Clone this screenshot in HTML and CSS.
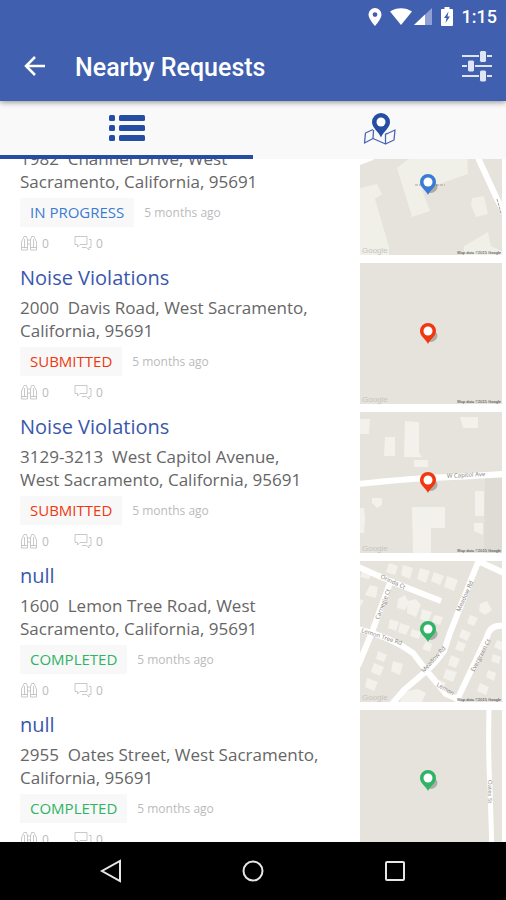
FILE: index.html
```html
<!DOCTYPE html>
<html lang="en">
<head>
<meta charset="utf-8">
<meta name="viewport" content="width=device-width, initial-scale=1">
<title>Nearby Requests</title>
<link rel="stylesheet" href="styles.css">
</head>
<body>
<svg class="defs" aria-hidden="true">
  <symbol id="pin" viewBox="0 0 24 24">
    <ellipse cx="15" cy="15" rx="6" ry="4.500" fill="#000" opacity=".24" transform="rotate(-35 15 15)"/>
    <path d="M11 22C9 17 3 14.500 3 9a8 8 0 0 1 16 0c0 5.500-6 8-8 13z" fill="currentColor"/>
    <circle cx="11" cy="9" r="4.500" fill="#fff"/>
  </symbol>
  <symbol id="watch" viewBox="0 0 18 16">
    <path d="M1.500 15V7L4 1.500h2.500L7.500 5v10zM10.500 15V5l1-3.500H14L16.500 7v8zM7.500 5h3M7.500 9h3M4.500 4v9M13.500 4v9M1.500 12.500h6M10.500 12.500h6" fill="none" stroke="currentColor" stroke-width=".8"/>
  </symbol>
  <symbol id="chat" viewBox="0 0 18 16">
    <path d="M1 1.500h12v8H6L3.500 12V9.500H1zM15 4.500h2v8h-2V15l-2.500-2.500H8" fill="none" stroke="currentColor" stroke-width=".8"/>
  </symbol>
</svg>

<header class="appbar">
  <div class="status">
    <svg width="14" height="18" viewBox="0 0 14 18"><path d="M7 0a6.500 6.500 0 0 0-6.500 6.500C.5 11 7 18 7 18s6.500-7 6.500-11.500A6.500 6.500 0 0 0 7 0zm0 9a2.400 2.400 0 1 1 0-4.800A2.400 2.400 0 0 1 7 9z" fill="#fff"/></svg>
    <svg class="wifi" width="22" height="17" viewBox="0 0 22 17"><path d="M11 17L0 3.500C6-1 16-1 22 3.500z" fill="#fff"/></svg>
    <svg class="signal" width="18" height="17" viewBox="0 0 18 17"><path d="M18 0v17H0z" fill="#8fa1d3"/><path d="M11 6.600V17H0z" fill="#fff"/></svg>
    <svg class="battery" width="12" height="19" viewBox="0 0 12 19"><path d="M3.500 0h5v2H11q1 0 1 1v15q0 1-1 1H1q-1 0-1-1V3q0-1 1-1h2.500z" fill="#fff"/><path d="M7.500 4.500L3 11h2.500L4.500 16 9 9.500H6.500z" fill="#405fae"/></svg>
    <span class="clock">1:15</span>
  </div>
  <div class="toolbar">
    <button class="icon-button" type="button" aria-label="Back">
      <svg width="22" height="22" viewBox="0 0 22 22"><path d="M21 10H2.500M11 1l-9 9 9 9" fill="none" stroke="#fff" stroke-width="2.500"/></svg>
    </button>
    <h1>Nearby Requests</h1>
    <button class="icon-button" type="button" aria-label="Filters">
      <svg width="32" height="32" viewBox="0 0 32 32"><path d="M1 5h30M1 15h30M1 25h30" stroke="#dfe5f5" stroke-width="2"/><g fill="#dfe5f5" stroke="#405fae"><rect x="18.500" y="-.5" width="7" height="12" rx="2"/><rect x="6.500" y="9" width="7" height="12" rx="2"/><rect x="18.500" y="19" width="7" height="12" rx="2"/></g></svg>
    </button>
  </div>
</header>

<nav class="tabs" aria-label="View">
  <button class="tab active" type="button" aria-label="List">
    <svg width="36" height="26" viewBox="0 0 36 26" fill="#244da3"><rect width="6" height="6" rx="1.500"/><rect y="10" width="6" height="6" rx="1.500"/><rect y="20" width="6" height="6" rx="1.500"/><rect x="10" width="26" height="6" rx="1.500"/><rect x="10" y="10" width="26" height="6" rx="1.500"/><rect x="10" y="20" width="26" height="6" rx="1.500"/></svg>
  </button>
  <button class="tab" type="button" aria-label="Map">
    <svg width="34" height="34" viewBox="0 0 34 34"><path d="M10 18.500l-7.500 3.500-1 10 8.500-4.500 12.500 5.500 8.500-4L32 19l-7.500 3.500-2 .5M10.500 19l-.5 8.500M22.500 23v10" fill="none" stroke="#4a66b3" stroke-width="1.300" stroke-linejoin="round"/><path d="M18 26.500C16 21 9 17 9 11a9 9 0 0 1 18 0C27 17 20 21 18 26.500z" fill="#244da3"/><circle cx="18" cy="11" r="4.500" fill="#fff"/></svg>
  </button>
</nav>

<main class="viewport">
  <ul class="requests">
    <li class="request">
      <div class="info">
        <h2><a href="#">Noise Violations</a></h2>
        <p class="address">1982  Channel Drive, West Sacramento, California, 95691</p>
        <div class="state"><span class="badge progress">IN PROGRESS</span><span class="age">5 months ago</span></div>
        <div class="counts"><svg><use href="#watch"/></svg><span>0</span><svg><use href="#chat"/></svg><span>0</span></div>
      </div>
      <div class="map progress">
        <svg viewBox="0 0 142 141" preserveAspectRatio="xMidYMid slice">
          <g fill="#f0efe8"><path d="M37 54l20-16 50-2 1 24-46 16 8 21-18 6z"/><path d="M0 74l17-4 5 10-7 5 14 48v8H0z"/><path d="M112 84l12-2 4 18-12 3-5-12zM104 132l24-14 3 14 11 5v4h-38z"/></g>
          <path d="M0 0h60L13 46 0 51z" fill="#fff"/>
          <path d="M108 20l12 28 17 37 8 15" fill="none" stroke="#fff" stroke-width="6"/>
          <path d="M55 71h9M76 71h9M137 85l4 14" stroke="#a5a39d" stroke-dasharray="3 1"/>
        </svg>
        <svg class="marker"><use href="#pin"/></svg><span class="brand">Google</span><span class="credit">Map data ©2015 Google</span>
      </div>
    </li>
    <li class="request">
      <div class="info">
        <h2><a href="#">Noise Violations</a></h2>
        <p class="address">2000  Davis Road, West Sacramento, California, 95691</p>
        <div class="state"><span class="badge submitted">SUBMITTED</span><span class="age">5 months ago</span></div>
        <div class="counts"><svg><use href="#watch"/></svg><span>0</span><svg><use href="#chat"/></svg><span>0</span></div>
      </div>
      <div class="map submitted">
        <svg class="marker"><use href="#pin"/></svg><span class="brand">Google</span><span class="credit">Map data ©2015 Google</span>
      </div>
    </li>
    <li class="request">
      <div class="info">
        <h2><a href="#">Noise Violations</a></h2>
        <p class="address">3129-3213  West Capitol Avenue, West Sacramento, California, 95691</p>
        <div class="state"><span class="badge submitted">SUBMITTED</span><span class="age">5 months ago</span></div>
        <div class="counts"><svg><use href="#watch"/></svg><span>0</span><svg><use href="#chat"/></svg><span>0</span></div>
      </div>
      <div class="map submitted">
        <svg viewBox="0 0 142 141" preserveAspectRatio="xMidYMid slice">
          <path d="M125 66h17v75h-18z" fill="#dedcd4"/>
          <g fill="#f2f1eb"><path d="M0 7h10l-1 15H0zM25 25h10v19H24zM45 9l14 1v31l3 4H44zM54 48h14v7H54zM100 5h18v11h-15zM12 86h10v7l-5 3-5-5zM0 96h4l1 10-1 15H0zM52 95h33v21H71v25H53zM115 79h9v25h-9zM114 111h9v12l-9-4z"/></g>
          <path d="M-2 72Q45 67 70 66T144 62" fill="none" stroke="#fff" stroke-width="6"/>
          <text x="87" y="66" transform="rotate(-3 87 66)">W Capitol Ave</text>
        </svg>
        <svg class="marker"><use href="#pin"/></svg><span class="brand">Google</span><span class="credit">Map data ©2015 Google</span>
      </div>
    </li>
    <li class="request">
      <div class="info">
        <h2><a href="#">null</a></h2>
        <p class="address">1600  Lemon Tree Road, West Sacramento, California, 95691</p>
        <div class="state"><span class="badge completed">COMPLETED</span><span class="age">5 months ago</span></div>
        <div class="counts"><svg><use href="#watch"/></svg><span>0</span><svg><use href="#chat"/></svg><span>0</span></div>
      </div>
      <div class="map completed">
        <svg viewBox="0 0 142 141" preserveAspectRatio="xMidYMid slice">
          <g fill="#f2f1eb"><path d="M29 2l9 3-3 9-9-3zM43 4l10 3-3 11-9-4zM60 7l10 3-4 12-9-4zM74 11l10 4-4 9-9-4zM87 15l11 4-4 11-10-4zM3 9l9 3-3 6-9-2zM10 24l8 2-2 11-11-3zM0 38l4 2-4 6zM38 38l7-4 4 8-4 7-8-2zM48 40l8-2 5 6-5 12-9-4zM62 48l10 3-4 10-8-3zM74 54l9 2-3 8-8-3zM30 58l9 3-3 9-8-3zM40 62l10 3-4 9-8-3zM52 68l9 3-2 7-9-3zM66 80l6 3-2 8-8-3zM18 90l9 4-3 7-8-3zM14 102l10 4-4 9-9-4zM33 100l10 3-3 11-9-4zM7 117l11 4-4 9-9-4zM43 131l15-3 8 4-4 9H40zM120 43l7-3 5 9-7 5-6-4zM110 54l8 3-4 8-7-3zM102 68l9 4-4 8-8-4zM98 80l8 3-3 8-8-3zM91 94l9 4-4 9-8-3zM86 108l11 3-4 10-10-4zM79 119l7 3-4 5-6-3zM137 79l5 2v9l-8-4zM133 93l8 3-2 7-8-3zM128 109l8 3-2 8-8-4zM120 122l9 4-3 8-9-4z"/></g>
          <g fill="none" stroke="#fff" stroke-width="6" stroke-linejoin="round"><path d="M-2 6l21 9 16 7 46 18M30 22L12 71-2 105M-2 68q33 8 55 24l13 17 20 24 12 5M120-4L90 72l-6 18q-10 14-20 22l-20 17-12 14M118 0l26 12M144 65q-14-2-17 11L96 141"/></g>
          <text x="20" y="17" transform="rotate(25 20 17)">Orinda Ct</text>
          <text x="19" y="59" transform="rotate(-69 19 59)">Carnegie Ct</text>
          <text x="1" y="71" transform="rotate(18 1 71)">Lemon Tree Rd</text>
          <text x="100" y="51" transform="rotate(-66 100 51)">Meadow Rd</text>
          <text x="64" y="112" transform="rotate(-48 64 112)">Meadow Rd</text>
          <text x="114" y="111" transform="rotate(-62 114 111)">Evergreen Ct</text>
          <text x="76" y="125" transform="rotate(30 76 125)">Lemon</text>
        </svg>
        <svg class="marker"><use href="#pin"/></svg><span class="brand">Google</span><span class="credit">Map data ©2015 Google</span>
      </div>
    </li>
    <li class="request">
      <div class="info">
        <h2><a href="#">null</a></h2>
        <p class="address">2955  Oates Street, West Sacramento, California, 95691</p>
        <div class="state"><span class="badge completed">COMPLETED</span><span class="age">5 months ago</span></div>
        <div class="counts"><svg><use href="#watch"/></svg><span>0</span><svg><use href="#chat"/></svg><span>0</span></div>
      </div>
      <div class="map completed">
        <svg viewBox="0 0 142 141" preserveAspectRatio="xMidYMid slice">
          <path d="M129-2q-1 50 1 80l2 65" fill="none" stroke="#fff" stroke-width="5"/>
          <text x="128" y="70" transform="rotate(90 128 70)">Oates St</text>
        </svg>
        <svg class="marker"><use href="#pin"/></svg><span class="brand">Google</span><span class="credit">Map data ©2015 Google</span>
      </div>
    </li>
  </ul>
</main>

<footer class="navbar">
  <button type="button" aria-label="Back"><svg width="24" height="24" viewBox="0 0 24 24"><path d="M21 2v20L3 12z"/></svg></button>
  <button type="button" aria-label="Home"><svg width="24" height="24" viewBox="0 0 24 24"><circle cx="12" cy="12" r="9.500"/></svg></button>
  <button type="button" aria-label="Recent apps"><svg width="24" height="24" viewBox="0 0 24 24"><rect x="3" y="3" width="18" height="18" rx="1"/></svg></button>
</footer>
</body>
</html>
```
FILE: styles.css
```css
* { box-sizing: border-box; }

body {
  margin: 0;
  height: 100vh;
  display: flex;
  flex-direction: column;
  background: #fff;
  color: #666;
  font-family: "Open Sans", "Noto Sans", sans-serif;
}

h1, h2, p, ul { margin: 0; padding: 0; }
button { padding: 0; border: 0; background: none; display: grid; place-items: center; cursor: pointer; }
.defs { position: absolute; width: 0; height: 0; }

.appbar {
  flex: none;
  background: #405fae;
  color: #fff;
  font-family: Roboto, sans-serif;
  box-shadow: 0 1px 6px rgba(0, 0, 0, .45);
  z-index: 1;
}
.status {
  height: 33px;
  padding: 0 9px;
  display: flex;
  align-items: center;
  justify-content: flex-end;
}
.wifi { margin-left: 8px; }
.signal { margin-left: 2px; }
.battery { margin: 0 9px; }
.clock { font-size: 18px; font-weight: 500; }

.toolbar {
  height: 68px;
  padding: 0 13px 0 24px;
  display: flex;
  align-items: center;
}
.toolbar h1 { flex: 1; margin-left: 29px; font-size: 25px; font-weight: 500; }

.tabs { flex: none; display: flex; height: 58px; background: #f9f9f9; }
.tab { flex: 1; border-bottom: 4px solid transparent; }
.tab.active { border-color: #244da3; }

.viewport { flex: 1; min-height: 0; overflow: hidden; }
.requests {
  margin-top: -45px;
  display: grid;
  gap: 8px;
  list-style: none;
}
.request { display: flex; padding: 0 4px 0 20px; }
.info { flex: 1; padding: 1px 40px 0 0; }
.info h2 { font-size: 20px; line-height: 28px; font-weight: 400; }
.info a { color: #3957ab; text-decoration: none; }
.address { margin-top: 4px; font-size: 17px; line-height: 23px; white-space: pre-wrap; }

.state { display: flex; align-items: center; gap: 10px; margin-top: 5px; }
.badge { padding: 0 10px; background: #f8f8f8; font-size: 15px; line-height: 29px; }
.age { color: #bbb; font-size: 12px; }
.progress { color: #3b7bd4; }
.submitted { color: #f0370f; }
.completed { color: #2fb366; }

.counts { display: flex; align-items: center; height: 16px; margin-top: 8px; color: #bbb; font-size: 12px; }
.counts svg { width: 18px; height: 16px; }
.counts span { margin: 0 25px 0 4px; }

.map {
  position: relative;
  flex: none;
  width: 142px;
  height: 141px;
  overflow: hidden;
  background: #e5e3db;
}
.map > svg { display: block; width: 100%; height: 100%; }
.map text { font-size: 6px; fill: #85837d; }
.map > .marker { position: absolute; left: 57px; top: 59px; width: 24px; height: 24px; }
.brand, .credit { position: absolute; bottom: 0; font-family: "Liberation Sans", sans-serif; line-height: 8px; }
.brand { left: 2px; color: #c7c5be; font-size: 8px; }
.credit { right: 1px; color: #333; font-size: 4px; line-height: 4px; }

.navbar {
  flex: none;
  height: 58px;
  display: flex;
  justify-content: center;
  gap: 118px;
  background: #000;
}
.navbar button { height: 100%; }
.navbar path, .navbar circle, .navbar rect { fill: none; stroke: #e6e6e6; stroke-width: 2; }
```
